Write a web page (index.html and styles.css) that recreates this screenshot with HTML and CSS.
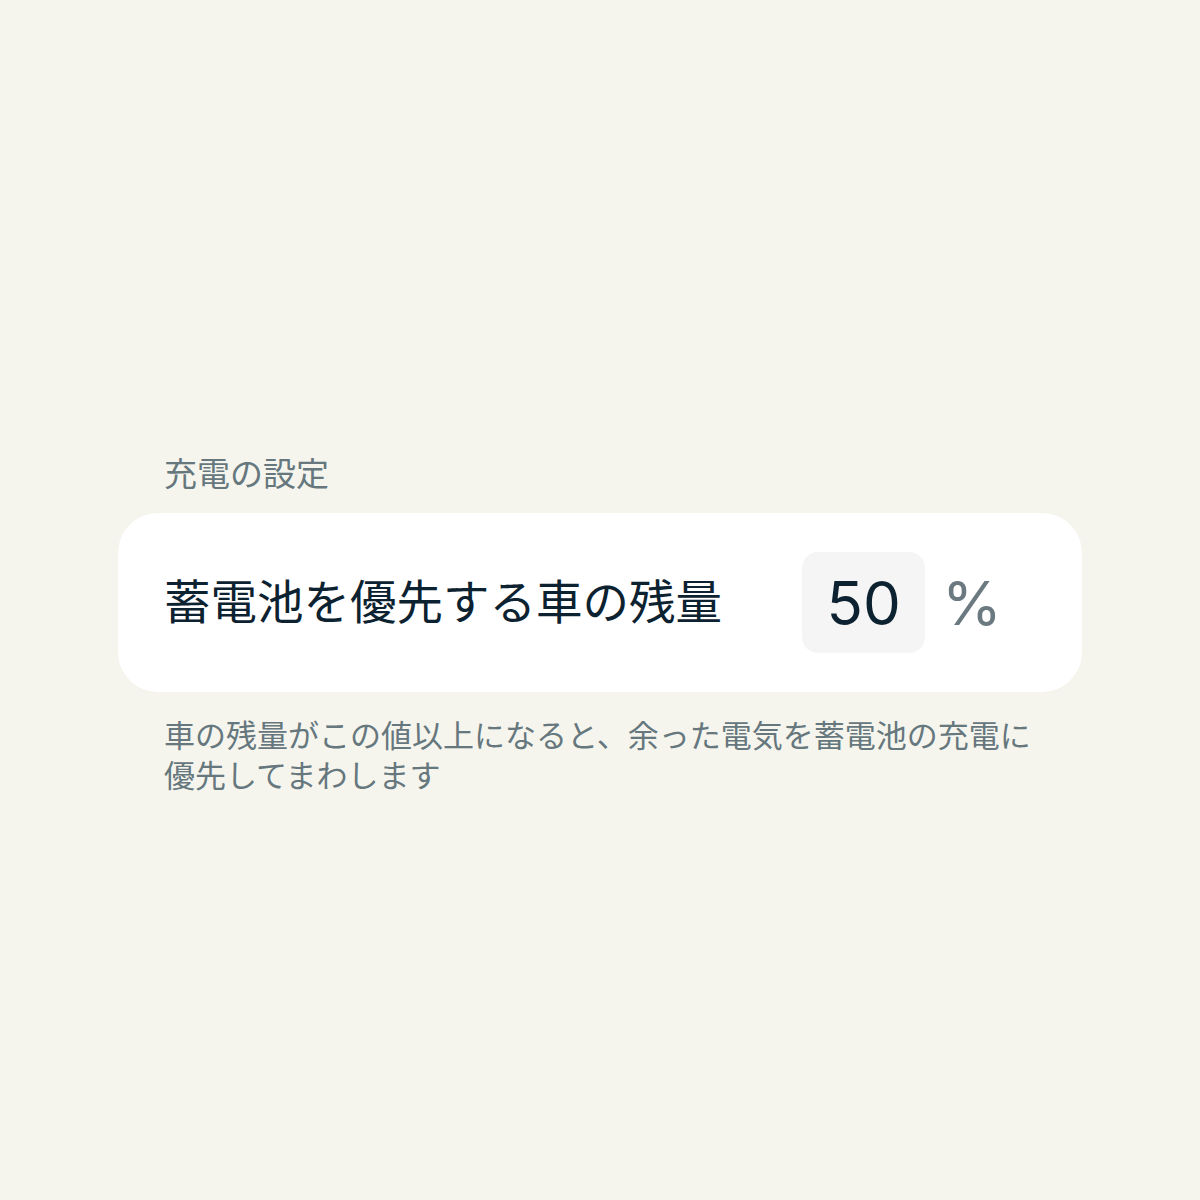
FILE: index.html
```html
<!DOCTYPE html>
<html lang="ja">
<head>
  <meta charset="UTF-8">
  <title>充電の設定</title>
  <link rel="stylesheet" href="styles.css">
</head>
<body>
  <div class="settings">
    <h2 class="section-title">充電の設定</h2>
    <div class="setting-card">
      <label class="setting-label" for="threshold">蓄電池を優先する車の残量</label>
      <div class="value-box">
        <output id="threshold">50</output>
      </div>
      <span class="unit">%</span>
    </div>
    <p class="setting-note">車の残量がこの値以上になると、余った電気を蓄電池の充電に優先してまわします</p>
  </div>
</body>
</html>
```

FILE: styles.css
```css
body {
  margin: 0;
  background-color: #f5f5ee;
  font-family: 'Noto Sans CJK JP', 'Noto Sans', sans-serif;
}
.settings {
  width: 964px;
  margin: 0 auto;
  padding-top: 451px;
}
.section-title {
  margin: 0;
  padding: 0 46px;
  font-size: 33px;
  line-height: 42px;
  font-weight: normal;
  color: #66777d;
}
.setting-card {
  display: flex;
  align-items: center;
  margin-top: 20px;
  padding: 39px 80px 39px 46px;
  background-color: #fff;
  border-radius: 40px;
}
.setting-label {
  flex: 1;
  padding-bottom: 8px;
  font-size: 46.5px;
  line-height: 60px;
  color: #0c2230;
}
.value-box {
  width: 123px;
  height: 101px;
  display: flex;
  align-items: center;
  justify-content: center;
  background-color: #f5f5f5;
  border-radius: 16px;
}
.value-box output {
  font-family: Inter, 'Liberation Sans', sans-serif;
  font-size: 60px;
  color: #0c2230;
}
.unit {
  margin-left: 17px;
  font-family: Inter, 'Liberation Sans', sans-serif;
  font-size: 61px;
  color: #6b7980;
}
.setting-note {
  margin: 22px 0 0;
  padding: 0 46px;
  font-size: 31px;
  line-height: 40px;
  color: #66777d;
}
```
